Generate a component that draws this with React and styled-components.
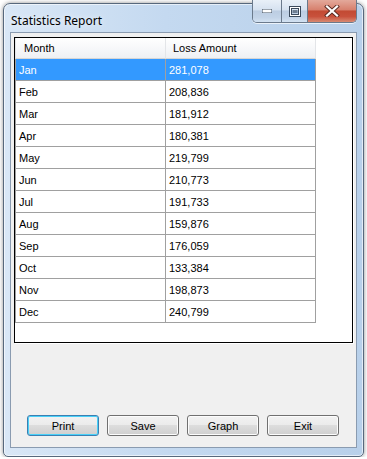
import React from "react";
import styled, { createGlobalStyle } from "styled-components";

const GlobalStyle = createGlobalStyle`
  html, body {
    margin: 0;
    padding: 0;
    background: #ffffff;
  }
  body {
    font-family: "Liberation Sans", Arial, sans-serif;
  }
`;

// Window chrome
const Window = styled.div`
  box-sizing: border-box;
  margin: 3px 0 0 3px;
  width: 361px;
  height: 454px;
  border: 1px solid #57687c;
  border-radius: 7px 7px 5px 5px;
  background: linear-gradient(90deg, #d9e7f6 0%, #c4d9f0 45%, #b8d0ea 100%);
  box-shadow: 0 0 4px rgba(0, 0, 0, 0.45), inset 0 0 0 1px rgba(255, 255, 255, 0.6);
  padding: 0 6px 8px 6px;
  display: flex;
  flex-direction: column;
`;

const TitleBar = styled.div`
  height: 28px;
  display: flex;
  align-items: flex-start;
  justify-content: space-between;
`;

const Title = styled.span`
  font-family: "Noto Sans", "Open Sans", sans-serif;
  font-size: 12px;
  color: #000;
  padding: 8px 0 0 1px;
  text-shadow: 0 0 6px rgba(255, 255, 255, 0.9);
`;

const CaptionGroup = styled.div`
  display: flex;
  margin-top: -4px;
  height: 22px;
  border: 1px solid #6b7a8c;
  border-top: none;
  border-radius: 0 0 5px 5px;
  overflow: hidden;
  box-shadow: 0 1px 0 rgba(255, 255, 255, 0.7);
`;

const CaptionButton = styled.div`
  width: ${({ $w }) => $w}px;
  display: flex;
  align-items: center;
  justify-content: center;
  border-left: ${({ $first }) => ($first ? "none" : "1px solid #6b7a8c")};
  background: ${({ $close }) =>
    $close
      ? "linear-gradient(180deg, #e3a99b 0%, #d7806d 45%, #c24a33 50%, #c8513c 75%, #d88a72 100%)"
      : "linear-gradient(180deg, #e9f0f8 0%, #d6e2f0 45%, #bccde2 50%, #c3d4e8 80%, #d3e2f2 100%)"};
`;

// Client area
const Client = styled.div`
  flex: 1;
  border: 1px solid #8a9bb0;
  background: #f0f0f0;
  padding: 4px 0 0 3px;
  display: flex;
  flex-direction: column;
`;

const Panel = styled.div`
  box-sizing: border-box;
  width: 339px;
  height: 306px;
  border: 1px solid #000;
  background: #fff;
  box-shadow: 1px 1px 0 #ffffff;
`;

const Grid = styled.div`
  display: grid;
  grid-template-columns: 151px 150px;
  font-family: "Liberation Sans", Arial, sans-serif;
  font-size: 11px;
`;

const HeaderCell = styled.div`
  box-sizing: border-box;
  height: 21px;
  display: flex;
  align-items: center;
  padding-left: ${({ $first }) => ($first ? 8 : 7)}px;
  background: linear-gradient(180deg, #ffffff 0%, #f7f8fa 50%, #eef0f3 100%);
  border-bottom: 1px solid #d5d5d5;
  border-right: 1px solid #e3e5e8;
  border-left: ${({ $first }) => ($first ? "1px solid #e3e5e8" : "none")};
  color: #000;
`;

const Cell = styled.div`
  box-sizing: border-box;
  height: 22px;
  display: flex;
  align-items: center;
  padding-left: ${({ $first }) => ($first ? 3 : 3)}px;
  border-bottom: 1px solid #a0a0a0;
  border-right: 1px solid #a0a0a0;
  border-left: ${({ $first }) => ($first ? "1px solid #a0a0a0" : "none")};
  background: ${({ $selected }) => ($selected ? "#3399ff" : "#ffffff")};
  color: ${({ $selected }) => ($selected ? "#ffffff" : "#000000")};
`;

const ButtonRow = styled.div`
  display: flex;
  gap: 8px;
  margin-top: 72px;
  padding-left: 13px;
`;

const Button = styled.button`
  box-sizing: border-box;
  width: 72px;
  height: 21px;
  padding: 0;
  font-family: "Liberation Sans", Arial, sans-serif;
  font-size: 11px;
  color: #000;
  border: 1px solid ${({ $focused }) => ($focused ? "#3c7fb1" : "#707070")};
  border-radius: 3px;
  background: linear-gradient(180deg, #f2f2f2 0%, #ebebeb 49%, #dddddd 50%, #cfcfcf 100%);
  box-shadow: inset 0 0 0 1px ${({ $focused }) => ($focused ? "#48d0f8" : "#fcfcfc")};
`;

const data = [
  ["Jan", "281,078"],
  ["Feb", "208,836"],
  ["Mar", "181,912"],
  ["Apr", "180,381"],
  ["May", "219,799"],
  ["Jun", "210,773"],
  ["Jul", "191,733"],
  ["Aug", "159,876"],
  ["Sep", "176,059"],
  ["Oct", "133,384"],
  ["Nov", "198,873"],
  ["Dec", "240,799"],
];

const glyphStroke = { stroke: "#3b4a5c", strokeWidth: 1, paintOrder: "stroke" };

const App = () => {
  return (
    <>
      <GlobalStyle />
      <Window>
        <TitleBar>
          <Title>Statistics Report</Title>
          <CaptionGroup>
            <CaptionButton $w={28} $first>
              <svg width="12" height="6" viewBox="0 0 12 6">
                <rect x="1.5" y="1.5" width="9" height="3" fill="#ffffff" {...glyphStroke} />
              </svg>
            </CaptionButton>
            <CaptionButton $w={25}>
              <svg width="12" height="11" viewBox="0 0 12 11">
                <rect x="1.5" y="1.5" width="9" height="8" fill="none" stroke="#3b4a5c" strokeWidth="3" />
                <rect x="1.5" y="1.5" width="9" height="8" fill="none" stroke="#ffffff" strokeWidth="1" />
                <rect x="3.5" y="4" width="5" height="3" fill="#3b4a5c" opacity="0.6" />
              </svg>
            </CaptionButton>
            <CaptionButton $w={48} $close>
              <svg width="16" height="12" viewBox="0 0 16 12">
                <path d="M3 1.5 L13 10.5 M13 1.5 L3 10.5" stroke="#5a2a22" strokeWidth="4" strokeLinecap="square" />
                <path d="M3 1.5 L13 10.5 M13 1.5 L3 10.5" stroke="#ffffff" strokeWidth="2.2" strokeLinecap="square" />
              </svg>
            </CaptionButton>
          </CaptionGroup>
        </TitleBar>
        <Client>
          <Panel>
            <Grid>
              <HeaderCell $first>Month</HeaderCell>
              <HeaderCell>Loss Amount</HeaderCell>
              {data.map(([month, amount], i) => (
                <React.Fragment key={month}>
                  <Cell $first $selected={i === 0}>{month}</Cell>
                  <Cell $selected={i === 0}>{amount}</Cell>
                </React.Fragment>
              ))}
            </Grid>
          </Panel>
          <ButtonRow>
            <Button $focused>Print</Button>
            <Button>Save</Button>
            <Button>Graph</Button>
            <Button>Exit</Button>
          </ButtonRow>
        </Client>
      </Window>
    </>
  );
};

export default App;
